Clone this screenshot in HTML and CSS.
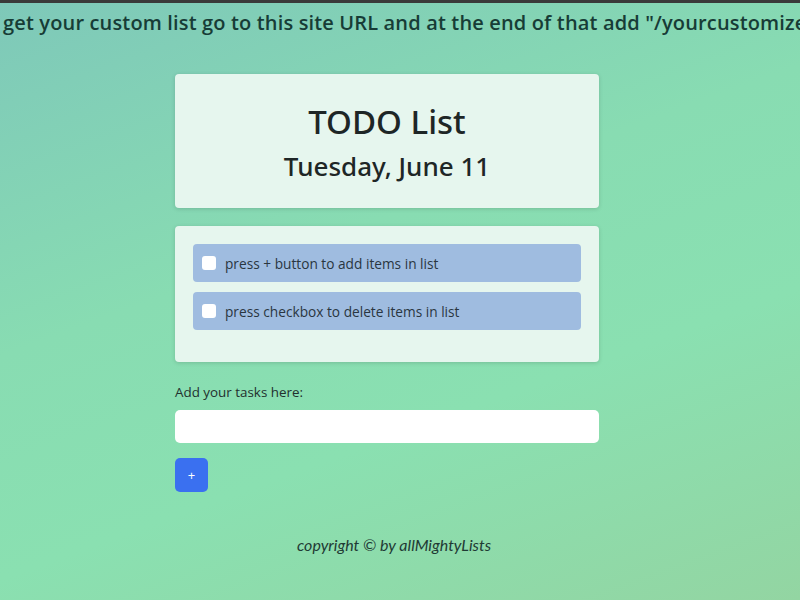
FILE: index.html
```html
<!DOCTYPE html>
<html>
<head>
<meta charset="utf-8">
<link rel="stylesheet" href="styles.css">
</head>
<body>
<div class="topbar"></div>
<div class="banner"><span>get your custom list go to this site URL and at the end of that add "/yourcustomize</span></div>
<main class="wrap">
  <section class="card head">
    <h1>TODO List</h1>
    <h2>Tuesday, June 11</h2>
  </section>
  <section class="card list">
    <label class="item"><input type="checkbox"><span>press + button to add items in list</span></label>
    <label class="item"><input type="checkbox"><span>press checkbox to delete items in list</span></label>
  </section>
  <form class="add">
    <label class="lbl">Add your tasks here:</label>
    <input class="field" type="text">
    <button class="btn" type="button">+</button>
  </form>
</main>
<footer class="foot">copyright © by allMightyLists</footer>
</body>
</html>
```
FILE: styles.css
```css
html, body { margin: 0; padding: 0; }
body {
  width: 800px;
  height: 600px;
  overflow: hidden;
  font-family: "Open Sans", "Noto Sans", sans-serif;
  background: linear-gradient(160deg, #7ec8b9 0%, #88dcb2 40%, #8ae0b1 65%, #93d5a2 100%);
  color: #1f2a2a;
}
.topbar { height: 3px; background: #3a3a3a; }
.banner {
  white-space: nowrap;
  overflow: hidden;
  padding-left: 3px;
  font-size: 20px;
  font-weight: 600;
  letter-spacing: 0.15px;
  color: #173c36;
  line-height: 40px;
  height: 40px;
}
.wrap {
  width: 424px;
  margin: 31px 0 0 175px;
  display: flex;
  flex-direction: column;
}
.card {
  background: #e6f6ee;
  border-radius: 4px;
  box-shadow: 0 1px 4px rgba(0,0,0,0.15);
}
.head {
  height: 134px;
  box-sizing: border-box;
  padding-top: 4px;
  display: flex;
  flex-direction: column;
  align-items: center;
  justify-content: center;
}
.head h1 {
  margin: 0;
  font-family: "Noto Sans", sans-serif;
  font-size: 33px;
  font-weight: 500;
  color: #1e2626;
  line-height: 44px;
}
.head h2 {
  margin: 2px 0 0;
  font-family: "Noto Sans", sans-serif;
  font-size: 26px;
  font-weight: 500;
  color: #1e2626;
  line-height: 40px;
}
.list {
  margin-top: 18px;
  padding: 18px 18px 32px;
  display: flex;
  flex-direction: column;
  gap: 10px;
}
.item {
  background: #9fbce0;
  border-radius: 4px;
  height: 38px;
  display: flex;
  align-items: center;
  padding-left: 9px;
  font-size: 13.7px;
  color: #2a3640;
}
.item input {
  appearance: none;
  width: 14px;
  height: 14px;
  background: #fff;
  border-radius: 3px;
  margin: 0 9px 0 0;
}
.add { margin-top: 20px; display: flex; flex-direction: column; align-items: flex-start; }
.lbl { font-size: 13.4px; color: #22302e; line-height: 20px; }
.field {
  margin-top: 8px;
  width: 424px;
  height: 33px;
  box-sizing: border-box;
  border: none;
  border-radius: 5px;
  background: #fff;
}
.btn {
  margin-top: 15px;
  width: 33px;
  height: 34px;
  border: none;
  border-radius: 5px;
  background: #3a70f0;
  color: #fff;
  font-size: 13px;
  font-family: "Open Sans", sans-serif;
  padding: 0;
}
.foot {
  margin-top: 43px;
  width: 788px;
  text-align: center;
  font-family: "Lato", sans-serif;
  font-style: italic;
  font-weight: 400;
  font-size: 16px;
  color: #1f3a34;
}
```
